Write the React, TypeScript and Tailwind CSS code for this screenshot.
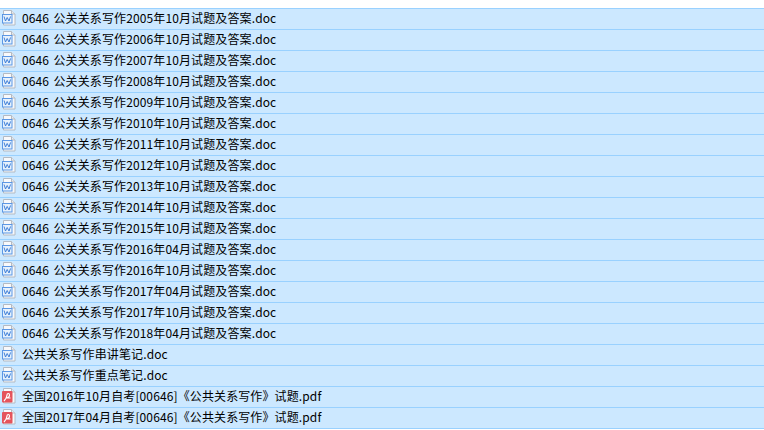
const files = [
  '0646 公关关系写作2005年10月试题及答案.doc',
  '0646 公关关系写作2006年10月试题及答案.doc',
  '0646 公关关系写作2007年10月试题及答案.doc',
  '0646 公关关系写作2008年10月试题及答案.doc',
  '0646 公关关系写作2009年10月试题及答案.doc',
  '0646 公关关系写作2010年10月试题及答案.doc',
  '0646 公关关系写作2011年10月试题及答案.doc',
  '0646 公关关系写作2012年10月试题及答案.doc',
  '0646 公关关系写作2013年10月试题及答案.doc',
  '0646 公关关系写作2014年10月试题及答案.doc',
  '0646 公关关系写作2015年10月试题及答案.doc',
  '0646 公关关系写作2016年04月试题及答案.doc',
  '0646 公关关系写作2016年10月试题及答案.doc',
  '0646 公关关系写作2017年04月试题及答案.doc',
  '0646 公关关系写作2017年10月试题及答案.doc',
  '0646 公关关系写作2018年04月试题及答案.doc',
  '公共关系写作串讲笔记.doc',
  '公共关系写作重点笔记.doc',
  '全国2016年10月自考[00646]《公共关系写作》试题.pdf',
  '全国2017年04月自考[00646]《公共关系写作》试题.pdf',
];

function DocIcon() {
  return (
    <svg width="16" height="16" viewBox="0 0 16 16" className="shrink-0">
      <path d="M2.5 0.5H10.5L14 4V15H2.5Z" fill="#f8f9fb" stroke="#b4bac3" />
      <path d="M10.5 0.5V4H14" fill="#e6e9ee" stroke="#b4bac3" />
      <rect x="1.5" y="4.5" width="9.5" height="8.5" fill="#e6f1fc" stroke="#5b97e5" />
      <path d="M3 6.5L4.5 11L6.2 7.5L8 11L9.5 6.5" fill="none" stroke="#3f7fd8" />
    </svg>
  );
}

function PdfIcon() {
  return (
    <svg width="16" height="16" viewBox="0 0 16 16" className="shrink-0">
      <path d="M2.5 0.5H10.5L14 4V15H2.5Z" fill="#f8f9fb" stroke="#b4bac3" />
      <path d="M10.5 0.5V4H14" fill="#e6e9ee" stroke="#b4bac3" />
      <rect x="1" y="3" width="10.5" height="11.5" rx="1" fill="#e5545c" />
      <path d="M3 13C4.5 11.5 6 9.5 6 7C6 5 8.5 5 8.5 7C8.5 9 7 10 4.5 10H9.5" fill="none" stroke="#fff" strokeWidth="1.2" />
    </svg>
  );
}

export default function App() {
  return (
    <div
      className="w-[764px] h-[430px] overflow-hidden bg-white pt-2 text-[12px] tracking-[0.12px] [word-spacing:1.5px] text-black"
      style={{ fontFamily: '"Noto Sans CJK SC", "Noto Sans", sans-serif' }}
    >
      {files.map((name) => (
        <div
          key={name}
          className="flex h-[21px] items-center gap-1 border-t border-[#99d1ff] bg-[#cce8ff] pl-[1px] last:h-[22px] last:border-b"
        >
          <span className="mb-[2px] flex w-[17px] shrink-0">
            {name.endsWith('.pdf') ? <PdfIcon /> : <DocIcon />}
          </span>
          <span className="whitespace-pre pb-[2px] leading-[18px]">{name}</span>
        </div>
      ))}
    </div>
  );
}
